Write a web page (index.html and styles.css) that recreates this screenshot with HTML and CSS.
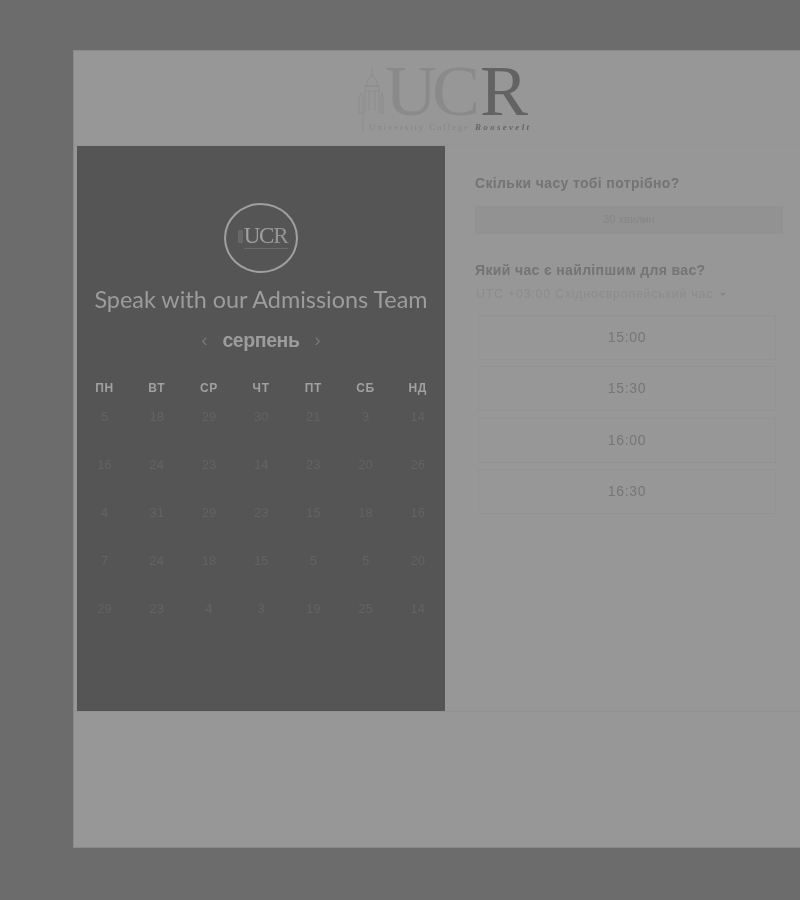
FILE: index.html
```html
<!DOCTYPE html>
<html lang="uk">
<head>
    <meta charset="UTF-8">
    <meta name="viewport" content="width=device-width, initial-scale=1.0">
    <title>Speak with our Admissions Team</title>
    <link rel="stylesheet" href="styles.css">
</head>
<body>
    <div class="card">
        <header class="brand">
            <svg class="logo" width="176" height="85" viewBox="0 -13 176 85">
                <g class="tower">
                    <path d="M14 4V13M14 10L10 16L8 22H20L18 16L14 10"/>
                    <path d="M7 22H21V27H7Z"/>
                    <path d="M7 27V49M21 27V49M11 27V47M17 27V47"/>
                    <path d="M1 33L3 29L5 33V49H1ZM23 33L24 29L25 33V49H23Z"/>
                    <path d="M5 49V68"/>
                </g>
                <text class="logo-uc" x="27" y="51">UC</text>
                <text class="logo-r" x="122" y="51">R</text>
                <text class="logo-name" x="11" y="65.5" textLength="99">University College</text>
                <text class="logo-place" x="117" y="65.5" textLength="54">Roosevelt</text>
            </svg>
        </header>
        <div class="main">
            <aside class="panel">
                <div class="badge">
                    <span class="badge-tower"></span>
                    <span class="badge-uc">UC</span><span class="badge-r">R</span>
                    <span class="badge-line"></span>
                </div>
                <h1 class="title">Speak with our Admissions Team</h1>
                <div class="month">
                    <span class="arrow">&lsaquo;</span>
                    <span class="month-name">серпень</span>
                    <span class="arrow">&rsaquo;</span>
                </div>
                <div class="calendar">
                    <div class="day-name">ПН</div><div class="day-name">ВТ</div><div class="day-name">СР</div><div class="day-name">ЧТ</div><div class="day-name">ПТ</div><div class="day-name">СБ</div><div class="day-name">НД</div>

                    <div class="day">5</div><div class="day">18</div><div class="day">29</div><div class="day">30</div><div class="day">21</div><div class="day">3</div><div class="day">14</div>
                    <div class="day">16</div><div class="day">24</div><div class="day">23</div><div class="day">14</div><div class="day">23</div><div class="day">20</div><div class="day">26</div>
                    <div class="day">4</div><div class="day">31</div><div class="day">29</div><div class="day">23</div><div class="day">15</div><div class="day">18</div><div class="day">16</div>
                    <div class="day">7</div><div class="day">24</div><div class="day">18</div><div class="day">15</div><div class="day">5</div><div class="day">5</div><div class="day">20</div>
                    <div class="day">29</div><div class="day">23</div><div class="day">4</div><div class="day">3</div><div class="day">19</div><div class="day">25</div><div class="day">14</div>
                </div>
            </aside>
            <section class="picker">
                <h2 class="question">Скільки часу тобі потрібно?</h2>
                <div class="duration">30 хвилин</div>
                <h2 class="question question-time">Який час є найліпшим для вас?</h2>
                <div class="timezone">UTC +03:00 Східноєвропейський час <span class="caret"></span></div>
                <div class="slots">
                    <div class="slot">15:00</div>
                    <div class="slot">15:30</div>
                    <div class="slot">16:00</div>
                    <div class="slot">16:30</div>
                </div>
            </section>
        </div>
    </div>
</body>
</html>
```

FILE: styles.css
```css
html, body {
    height: 100%;
}

body {
    margin: 0;
    overflow: hidden;
    background-color: #6c6c6c;
    font-family: "Liberation Sans", Arial, sans-serif;
}

.card {
    box-sizing: border-box;
    width: 760px;
    height: 798px;
    margin: 50px 0 0 73px;
    background: #979797;
    border: 1px solid #8a8a8a;
    filter: blur(0.6px);
}

.brand {
    box-sizing: content-box;
    height: 94px;
    padding-left: 284px;
    border-bottom: 1px solid #949494;
}

.logo {
    display: block;
    overflow: visible;
}

.tower {
    fill: none;
    stroke: #8a8a8a;
    stroke-width: 0.7;
}

.logo-uc, .logo-r {
    font-family: "Liberation Serif", serif;
    font-size: 72px;
}

.logo-uc {
    letter-spacing: -5px;
    fill: #8a8a8a;
}

.logo-r {
    fill: #636363;
}

.logo-name, .logo-place {
    font-family: "Liberation Serif", serif;
    font-size: 9px;
}

.logo-name {
    fill: #868686;
}

.logo-place {
    font-style: italic;
    font-weight: 700;
    fill: #656565;
}

.main {
    display: flex;
    height: 565px;
    border-bottom: 1px solid #919191;
}

.panel {
    box-sizing: border-box;
    flex: 0 0 368px;
    height: 565px;
    margin-left: 3px;
    padding-top: 57px;
    background: #555555;
    text-align: center;
}

.badge {
    box-sizing: border-box;
    position: relative;
    display: flex;
    align-items: center;
    justify-content: center;
    width: 74px;
    height: 70px;
    margin: 0 auto;
    padding: 0 0 4px 9px;
    border: 2px solid #a0a0a0;
    border-radius: 50%;
    font-family: "Liberation Serif", serif;
    font-size: 23px;
    letter-spacing: -1.2px;
}

.badge-tower {
    position: absolute;
    left: 12px;
    top: 25px;
    width: 5px;
    height: 13px;
    background: #686868;
}

.badge-line {
    position: absolute;
    left: 18px;
    top: 43px;
    width: 44px;
    height: 1px;
    background: #6a6a6a;
}

.badge-uc {
    color: #a0a0a0;
}

.badge-r {
    color: #949494;
}

.title {
    margin: 12px 0 0;
    font-family: Lato, sans-serif;
    font-size: 23.4px;
    font-weight: 400;
    line-height: 28px;
    color: #9c9c9c;
    white-space: nowrap;
}

.month {
    display: flex;
    align-items: center;
    justify-content: center;
    gap: 15px;
    height: 28px;
    margin-top: 13px;
}

.month-name {
    font-size: 19.5px;
    font-weight: 700;
    letter-spacing: -0.4px;
    color: #9c9c9c;
}

.arrow {
    font-size: 18px;
    color: #787878;
}

.calendar {
    display: grid;
    grid-template-columns: repeat(7, 52.2px);
    grid-template-rows: 22px repeat(5, 48px);
    margin-top: 23px;
    padding-left: 1.5px;
    text-align: center;
}

.day-name {
    font-size: 12px;
    font-weight: 700;
    line-height: 22px;
    letter-spacing: 0.7px;
    color: #a0a0a0;
}

.day {
    padding-top: 10px;
    font-size: 13px;
    line-height: 16px;
    color: #636363;
}

.picker {
    flex: 1;
    padding: 28px 0 0 30px;
    min-width: 0;
}

.question {
    margin: 0;
    font-size: 14px;
    font-weight: 700;
    line-height: 18px;
    letter-spacing: 0.35px;
    color: #747474;
}

.duration {
    width: 308px;
    height: 28px;
    margin-top: 14px;
    background: #929292;
    font-size: 11px;
    line-height: 27px;
    text-align: center;
    color: #868686;
}

.question-time {
    margin-top: 27px;
}

.timezone {
    margin-top: 7px;
    padding-left: 1px;
    font-size: 12.5px;
    line-height: 16px;
    letter-spacing: 0.72px;
    color: #8c8c8c;
}

.caret {
    display: inline-block;
    margin: 0 0 2px 3px;
    border-left: 3px solid transparent;
    border-right: 3px solid transparent;
    border-top: 3px solid #858585;
}

.slots {
    display: flex;
    flex-direction: column;
    gap: 6.4px;
    width: 298px;
    margin: 13px 0 0 3px;
}

.slot {
    box-sizing: border-box;
    height: 45px;
    border: 1px solid #939393;
    font-size: 14px;
    line-height: 43px;
    letter-spacing: 0.7px;
    text-align: center;
    color: #767676;
}
```
